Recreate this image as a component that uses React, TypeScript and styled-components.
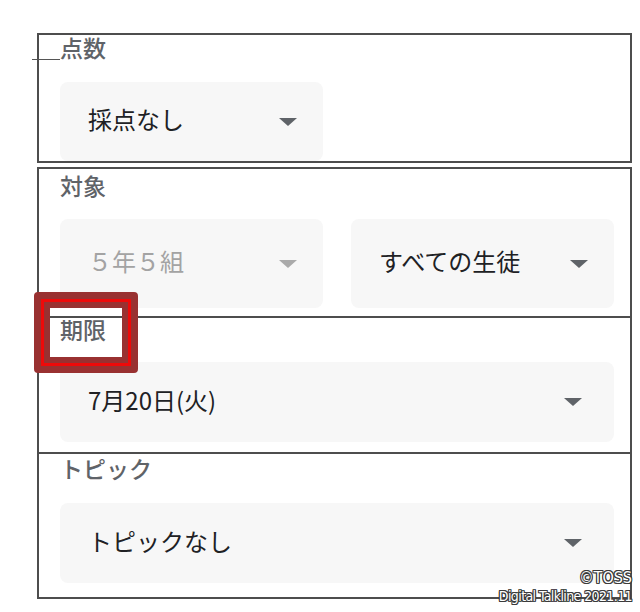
import styled, { createGlobalStyle } from "styled-components";

const GlobalStyle = createGlobalStyle`
  html, body {
    margin: 0;
    padding: 0;
    background: #ffffff;
  }
  body {
    font-family: "Noto Sans CJK JP", "Noto Sans", sans-serif;
  }
`;

const LINE = "#4d4d4d";

const Page = styled.div`
  position: relative;
  width: 640px;
  height: 612px;
  padding: 33px 0 0 37px;
  box-sizing: border-box;
  background: #ffffff;
  overflow: hidden;
`;

const Card = styled.section`
  width: 595px;
  border: 2px solid ${LINE};
  box-sizing: border-box;
`;

const Group = styled(Card)`
  margin-top: 4px;
`;

interface FieldProps {
  $top: number;
  $bottom: number;
  $gap: number;
}

const Field = styled.div<FieldProps>`
  padding: ${({ $top }) => $top}px 15px ${({ $bottom }) => $bottom}px 21px;
  display: flex;
  flex-direction: column;
  gap: ${({ $gap }) => $gap}px;

  & + & {
    border-top: 2px solid ${LINE};
  }
`;

// glyphs of the CJK face sit low in their line box, so nudge them up
const Label = styled.div`
  font-size: 23px;
  line-height: 24px;
  font-weight: 500;
  color: #5f6368;
  margin: -3px 0 3px;
`;

const Row = styled.div`
  display: flex;
  gap: 28px;
`;

interface SelectProps {
  $wide?: boolean;
  $height: number;
  $disabled?: boolean;
}

const Select = styled.div<SelectProps>`
  width: ${({ $wide }) => ($wide ? "554px" : "263px")};
  height: ${({ $height }) => $height}px;
  box-sizing: border-box;
  padding: 0 ${({ $wide }) => ($wide ? 32 : 26)}px 6px 28px;
  border-radius: 8px;
  background: #f7f7f7;
  display: flex;
  align-items: center;
  justify-content: space-between;
  font-size: 24px;
  color: ${({ $disabled }) => ($disabled ? "#a3a3a3" : "#202124")};
`;

const Arrow = styled.span<{ $disabled?: boolean }>`
  width: 0;
  height: 0;
  margin-top: 6px;
  border-left: 9px solid transparent;
  border-right: 9px solid transparent;
  border-top: 8px solid ${({ $disabled }) => ($disabled ? "#aaaaaa" : "#5f6368")};
`;

const StrayLine = styled.div`
  position: absolute;
  left: 32px;
  top: 59px;
  width: 28px;
  height: 1px;
  background: #555555;
`;

const Highlight = styled.div`
  position: absolute;
  left: 34px;
  top: 292px;
  width: 104px;
  height: 81px;
  box-sizing: border-box;
  border: 16px solid #993131;
  border-radius: 4px;

  &::after {
    content: "";
    position: absolute;
    inset: -9px;
    border: 3px solid #ee0a0a;
  }
`;

const Watermark = styled.div`
  position: absolute;
  right: 8px;
  bottom: 6px;
  text-align: right;
  font-family: "DejaVu Sans Condensed", "Liberation Sans Narrow", "Liberation Sans", sans-serif;
  font-size: 14px;
  line-height: 19px;
  letter-spacing: -0.6px;
  color: #ffffff;
  text-shadow:
    1px 0 0 #3a3a3a,
    -1px 0 0 #3a3a3a,
    0 1px 0 #3a3a3a,
    0 -1px 0 #3a3a3a,
    1px 1px 0 #3a3a3a,
    -1px -1px 0 #3a3a3a,
    1px -1px 0 #3a3a3a,
    -1px 1px 0 #3a3a3a;
`;

const Mark = styled.div`
  font-size: 16px;
  letter-spacing: 0;
`;

const App = () => {
  return (
    <Page>
      <GlobalStyle />

      <Card>
        <Field $top={3} $bottom={0} $gap={20}>
          <Label>点数</Label>
          <Select $height={79}>
            採点なし
            <Arrow />
          </Select>
        </Field>
      </Card>

      <Group>
        <Field $top={7} $bottom={8} $gap={19}>
          <Label>対象</Label>
          <Row>
            <Select $height={89} $disabled>
              ５年５組
              <Arrow $disabled />
            </Select>
            <Select $height={89}>
              すべての生徒
              <Arrow />
            </Select>
          </Row>
        </Field>

        <Field $top={2} $bottom={10} $gap={18}>
          <Label>期限</Label>
          <Select $wide $height={80}>
            7月20日(火)
            <Arrow />
          </Select>
        </Field>

        <Field $top={5} $bottom={14} $gap={20}>
          <Label>トピック</Label>
          <Select $wide $height={80}>
            トピックなし
            <Arrow />
          </Select>
        </Field>
      </Group>

      <StrayLine />
      <Highlight />
      <Watermark>
        <Mark>©TOSS</Mark>
        Digital Talkline 2021.11
      </Watermark>
    </Page>
  );
};

export default App;
